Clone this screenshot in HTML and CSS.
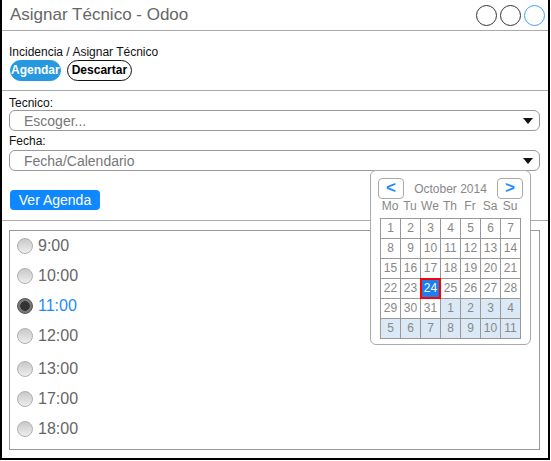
FILE: index.html
```html
<!DOCTYPE html>
<html lang="es">
<head>
<meta charset="utf-8">
<title>Asignar Técnico - Odoo</title>
<link rel="stylesheet" href="styles.css">
</head>
<body>
<div class="window">
  <header class="titlebar">
    <span class="title">Asignar Técnico - Odoo</span>
    <div class="dots">
      <span class="dot"></span>
      <span class="dot"></span>
      <span class="dot dot-blue"></span>
    </div>
  </header>

  <section class="head">
    <div class="crumb">Incidencia / Asignar Técnico</div>
    <div class="actions">
      <button class="pill pill-primary">Agendar</button>
      <button class="pill pill-outline">Descartar</button>
    </div>
  </section>

  <section class="form">
    <div class="label">Tecnico:</div>
    <div class="select"><span class="placeholder">Escoger...</span><span class="caret"></span></div>
    <div class="label label-second">Fecha:</div>
    <div class="select select-second"><span class="placeholder">Fecha/Calendario</span><span class="caret"></span></div>
    <button class="btn">Ver Agenda</button>
  </section>

  <section class="times">
    <div class="list">
      <div class="row"><span class="radio"></span><span class="time">9:00</span></div>
      <div class="row"><span class="radio"></span><span class="time">10:00</span></div>
      <div class="row"><span class="radio radio-on"></span><span class="time time-on">11:00</span></div>
      <div class="row"><span class="radio"></span><span class="time">12:00</span></div>
      <div class="row row-gap"><span class="radio"></span><span class="time">13:00</span></div>
      <div class="row"><span class="radio"></span><span class="time">17:00</span></div>
      <div class="row"><span class="radio"></span><span class="time">18:00</span></div>
    </div>
  </section>

  <div class="calendar">
    <div class="cal-head">
      <span class="nav">&lt;</span>
      <span class="month">October 2014</span>
      <span class="nav">&gt;</span>
    </div>
    <div class="weekdays">
      <span>Mo</span><span>Tu</span><span>We</span><span>Th</span><span>Fr</span><span>Sa</span><span>Su</span>
    </div>
    <div class="days">
      <span>1</span><span>2</span><span>3</span><span>4</span><span>5</span><span>6</span><span>7</span>
      <span>8</span><span>9</span><span>10</span><span>11</span><span>12</span><span>13</span><span>14</span>
      <span>15</span><span>16</span><span>17</span><span>18</span><span>19</span><span>20</span><span>21</span>
      <span>22</span><span>23</span><span class="sel">24</span><span>25</span><span>26</span><span>27</span><span>28</span>
      <span>29</span><span>30</span><span>31</span><span class="next">1</span><span class="next">2</span><span class="next">3</span><span class="next">4</span>
      <span class="next">5</span><span class="next">6</span><span class="next">7</span><span class="next">8</span><span class="next">9</span><span class="next">10</span><span class="next">11</span>
    </div>
  </div>
</div>
</body>
</html>
```

FILE: styles.css
```css
* { box-sizing: border-box; }

body {
  margin: 0;
  background: #fff;
  font-family: "Liberation Sans", Arial, sans-serif;
}

.window {
  position: relative;
  width: 550px;
  height: 460px;
  border: 2px solid #000;
  border-top: 0;
  display: flex;
  flex-direction: column;
}

.titlebar {
  height: 31px;
  border-bottom: 1px solid #aaa;
  display: flex;
  align-items: center;
  justify-content: space-between;
  padding: 0 3px 0 8px;
}

.title {
  font-size: 17px;
  color: #666;
}

.dots {
  display: flex;
  gap: 3px;
}

.dot {
  width: 21px;
  height: 21px;
  border: 1.5px solid #333;
  border-radius: 50%;
}

.dot-blue { border-color: #3d9dff; }

.head {
  padding: 14px 0 9px 7px;
  border-bottom: 1px solid #aaa;
}

.crumb {
  font-size: 12px;
  line-height: 14px;
  color: #111;
}

.actions {
  display: flex;
  gap: 6px;
  margin-top: 1px;
  margin-left: 1px;
}

.pill {
  height: 21px;
  border-radius: 11px;
  font-family: "Liberation Sans", Arial, sans-serif;
  font-weight: bold;
  font-size: 12px;
  line-height: 19px;
  border: 1px solid transparent;
  background: #fff;
  color: #000;
  margin: 0;
}

.pill-primary {
  background: #2598df;
  border-color: #2598df;
  color: #fff;
  padding: 0;
}

.pill-outline {
  border-color: #111;
  padding: 0 4px;
}

.form {
  padding: 5px 8px 10px 7px;
  border-bottom: 1px solid #aaa;
  display: flex;
  flex-direction: column;
  align-items: stretch;
}

.label {
  font-size: 12px;
  line-height: 14px;
  color: #111;
}

.label-second { margin-top: 3px; }

.select {
  height: 21px;
  border: 1px solid #999;
  border-radius: 6px;
  display: flex;
  align-items: center;
  justify-content: space-between;
  padding: 0 6px 0 14px;
}

.select-second { margin-top: 2px; }

.placeholder {
  font-size: 14px;
  color: #777;
}

.caret {
  width: 0;
  height: 0;
  border-left: 5px solid transparent;
  border-right: 5px solid transparent;
  border-top: 6px solid #111;
  margin-top: 1px;
}

.btn {
  align-self: flex-start;
  margin: 19px 0 0 1px;
  width: 90px;
  height: 20px;
  border: 0;
  border-radius: 4px;
  background: #0f88ff;
  color: #fff;
  font-family: "Liberation Sans", Arial, sans-serif;
  font-size: 14px;
  line-height: 20px;
  padding: 0;
}

.times {
  flex: 1;
  padding: 9px 8px 8px 7px;
}

.list {
  height: 220px;
  border: 1px solid #999;
  padding: 0 0 0 7px;
}

.row {
  height: 30px;
  display: flex;
  align-items: center;
  gap: 5px;
}

.row-gap { margin-top: 3px; }

.radio {
  width: 16px;
  height: 16px;
  border-radius: 50%;
  border: 1px solid #b0b0b0;
  background: linear-gradient(#c8c8c8, #eeeeee);
}

.radio-on {
  border-color: #555;
  background: radial-gradient(circle, #333 0 4.5px, #777 5px);
}

.time {
  font-size: 16px;
  color: #666;
}

.time-on { color: #1a8cff; }

.calendar {
  position: absolute;
  left: 368px;
  top: 170px;
  width: 161px;
  height: 175px;
  background: #fff;
  border: 1px solid #aaa;
  border-radius: 6px;
  padding: 7px 9px 0;
}

.cal-head {
  display: flex;
  align-items: center;
  justify-content: space-between;
  margin: 0 -2px;
  height: 21px;
}

.nav {
  width: 26px;
  height: 21px;
  border: 1px solid #aaa;
  border-radius: 4px;
  color: #1a8cff;
  font-weight: bold;
  font-size: 17px;
  line-height: 18px;
  text-align: center;
}

.month {
  font-size: 12px;
  color: #888;
}

.weekdays {
  display: grid;
  grid-template-columns: repeat(7, 20px);
  margin-top: 1px;
  height: 13px;
  font-size: 12px;
  line-height: 13px;
  color: #888;
  text-align: center;
}

.days {
  display: grid;
  grid-template-columns: repeat(7, 19px);
  grid-auto-rows: 19px;
  gap: 1px;
  margin-top: 5px;
  width: 141px;
  border: 1px solid #999;
  background: #999;
}

.days span {
  background: #fff;
  font-size: 12px;
  line-height: 19px;
  text-align: center;
  color: #888;
}

.days .next { background: #dbe8f5; }

.days .sel {
  position: relative;
  z-index: 1;
  background: #1a80f0;
  color: #fff;
  outline: 2px solid #f00;
  outline-offset: -1px;
}
```
